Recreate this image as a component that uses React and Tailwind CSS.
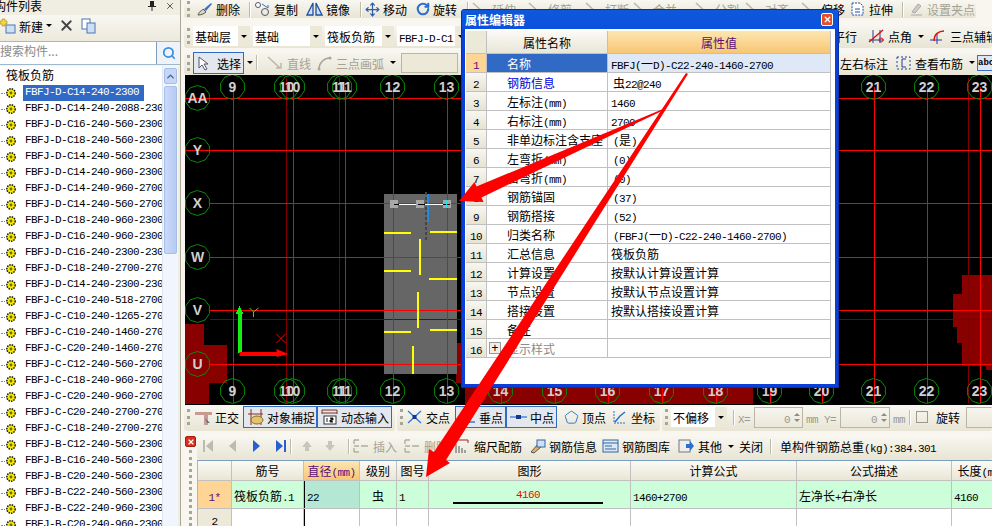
import React from 'react';
import { Move, RotateCw, Search, X, ChevronUp, Pentagon } from 'lucide-react';

const CJK = "[font-family:'Noto_Sans_CJK_SC',sans-serif]";

const treeItems = [
  'FBFJ-D-C14-240-2300', 'FBFJ-D-C14-240-2088-230', 'FBFJ-D-C16-240-560-2300', 'FBFJ-D-C18-240-560-2300',
  'FBFJ-D-C14-240-560-2300', 'FBFJ-D-C14-240-960-2300', 'FBFJ-D-C14-240-960-2700', 'FBFJ-D-C14-240-560-2700',
  'FBFJ-D-C18-240-960-2300', 'FBFJ-D-C16-240-960-2300', 'FBFJ-D-C16-240-2300-230', 'FBFJ-D-C18-240-2700-270',
  'FBFJ-D-C14-240-2300-230', 'FBFJ-C-C10-240-518-2700', 'FBFJ-C-C10-240-1265-270', 'FBFJ-C-C10-240-1460-270',
  'FBFJ-C-C20-240-1460-270', 'FBFJ-C-C12-240-560-2700', 'FBFJ-C-C18-240-960-2700', 'FBFJ-C-C20-240-960-2700',
  'FBFJ-C-C20-240-2700-270', 'FBFJ-C-C18-240-2700-270', 'FBFJ-B-C12-240-560-2300', 'FBFJ-B-C16-240-560-2300',
  'FBFJ-B-C20-240-560-2300', 'FBFJ-B-C22-240-560-2300', 'FBFJ-B-C22-240-960-2300', 'FBFJ-B-C20-240-960-2300',
];

const props = [
  { name: '名称', value: 'FBFJ(一D)-C22-240-1460-2700', selected: true },
  { name: '钢筋信息', value: '虫22@240', blue: true, pad: true },
  { name: '左标注(mm)', value: '1460' },
  { name: '右标注(mm)', value: '2700' },
  { name: '非单边标注含支座', value: '(是)', pad: true },
  { name: '左弯折(mm)', value: '(0)', pad: true },
  { name: '右弯折(mm)', value: '(0)', pad: true },
  { name: '钢筋锚固', value: '(37)', pad: true },
  { name: '钢筋搭接', value: '(52)', pad: true },
  { name: '归类名称', value: '(FBFJ(一D)-C22-240-1460-2700)', pad: true },
  { name: '汇总信息', value: '筏板负筋' },
  { name: '计算设置', value: '按默认计算设置计算' },
  { name: '节点设置', value: '按默认节点设置计算' },
  { name: '搭接设置', value: '按默认搭接设置计算' },
  { name: '备注', value: '' },
  { name: '显示样式', value: '', expand: true },
];

// mixed latin / cjk text, the latin gets the narrow look of the original bitmap font
function T({ children, className = '' }) {
  const parts = String(children).split(/([\x20-\x7e]+)/).filter(Boolean);
  return (
    <span className={`whitespace-nowrap ${className}`}>
      {parts.map((p, i) =>
        /^[\x20-\x7e]+$/.test(p)
          ? <span key={i} className="[font-family:'Liberation_Mono',monospace] text-[11px] tracking-[-0.6px]">{p}</span>
          : <span key={i} className={`${CJK} text-[12px]`}>{p}</span>
      )}
    </span>
  );
}

function Grip() {
  return <div className="mx-[3px] w-[3px] h-[16px] shrink-0 border-l-[3px] border-dotted border-[#a8a594]" />;
}

function Sep() {
  return <div className="mx-[3px] w-[2px] h-[15px] shrink-0 border-l border-r border-l-[#bdbaa8] border-r-white" />;
}

function Tool({ w, icon, label, muted, boxed, right }) {
  return (
    <div
      style={{ width: w }}
      className={`flex items-center gap-[3px] h-[22px] shrink-0 ${boxed ? 'border border-[#316ac5] bg-[#e3e7ee] pl-[3px]' : ''} ${muted ? 'text-[#a5a294]' : 'text-black'}`}
    >
      {icon}
      <T>{label}</T>
      {right}
    </div>
  );
}

const Caret = () => <span className="ml-[3px] w-0 h-0 shrink-0 border-x-[3px] border-x-transparent border-t-[3px] border-t-black" />;

const I = ({ children, w = 17 }) => (
  <svg width={w} height="16" viewBox="0 0 17 16" className="shrink-0">{children}</svg>
);

const icons = {
  erase: <I><path d="M2 14 C4 9 6 10 7 8 L10 11 C8 13 5 14 2 14Z" fill="#d8d4c0" stroke="#555" /><path d="M8 8 L15 2 L16 3 L10 10Z" fill="#3f6fc4" /></I>,
  copy: <I><circle cx="4" cy="4" r="2.5" fill="#fff" stroke="#556" /><circle cx="11" cy="11" r="3.5" fill="none" stroke="#556" /><path d="M8 3 L14 7 M14 7 V4" stroke="#2a6fd0" /></I>,
  mirror: <I><path d="M7 2 L1 14 H7Z M10 2 L16 14 H10Z" fill="#cfe0f6" stroke="#1f4fa0" strokeWidth="1.3" /></I>,
  stretch: <I><path d="M3 2 H11 L14 5 V14 H3Z" fill="#fff" stroke="#1f4fa0" strokeDasharray="2 1" /><path d="M6 8 H11 M6 11 H11" stroke="#1f4fa0" /></I>,
  grip: <I><path d="M4 14 H15 M5 11 L11 3 L14 5 L8 12Z" fill="#ccc" stroke="#aaa" /></I>,
  angle: <I><path d="M1 12 H16 M5 2 V15 M12 2 V15" stroke="#1f3f9f" /><path d="M1 14 L15 2" stroke="#e01010" strokeWidth="1.5" /><circle cx="13" cy="12" r="2" fill="none" stroke="#e01010" /></I>,
  arc: <I><path d="M0 12 H12 M7 6 V16" stroke="#1f3f9f" /><path d="M4 13 C4 6 9 3 14 3" fill="none" stroke="#e01010" strokeWidth="1.5" /></I>,
  rebar: <I><path d="M2 2 H15 V14 H2Z" fill="none" stroke="#1f3f9f" strokeDasharray="2 2" /><path d="M7 4 H11 M7 4 V12 M7 12 H11" stroke="#1f3f9f" /></I>,
  pick: <I><path d="M2 2 V13 L5 10 L8 15 L10 14 L7 9 H11Z" fill="#fff" stroke="#556" /></I>,
  line: <I><path d="M1 2 L13 13 M9 13 H14 V8" stroke="#b8b6a8" strokeWidth="1.4" fill="none" /></I>,
  arc3: <I><path d="M3 14 C3 8 8 3 14 3" fill="none" stroke="#a8a69a" strokeWidth="1.5" /><circle cx="3" cy="14" r="1.5" fill="#a8a69a" /><circle cx="14" cy="3" r="1.5" fill="#a8a69a" /></I>,
  ortho: <I><path d="M0 3 H17 V6 H13 V16 H9 V6 H0Z" fill="#c99a94" /><path d="M10 9 L15 14 L12 14Z" fill="#5a6fa0" /></I>,
  snap: <I><path d="M4 0 V16 M14 0 V16" stroke="#8a3020" /><path d="M1 5 H16" stroke="#8a3020" /><ellipse cx="10" cy="11" rx="6" ry="4" fill="#e3c46a" stroke="#8a6a20" /></I>,
  dyn: <I><path d="M1 1 H16 M1 4 H16 M1 1 V5 M16 1 V5" stroke="#8a3020" /><rect x="3" y="7" width="12" height="8" fill="#fff" stroke="#333" /><path d="M6 9 V13 M9 9 H12 V11 H9 V13 H12" stroke="#222" /></I>,
  cross: <I><path d="M2 2 L15 14 M15 2 L2 14" stroke="#3878d8" strokeWidth="1.4" /><rect x="6.5" y="6" width="4" height="4" fill="#123a8a" /></I>,
  perp: <I><path d="M8 1 V12 M1 13 H16" stroke="#3878d8" strokeWidth="1.3" /><rect x="6.5" y="10" width="4" height="4" fill="#123a8a" /></I>,
  mid: <I><path d="M0 8 H17" stroke="#3878d8" strokeWidth="1.3" /><rect x="6" y="6" width="5" height="4" fill="#123a8a" /></I>,
  vertex: <Pentagon size={15} color="#2a6fd0" strokeWidth={1.5} className="shrink-0" />,
  coord: <I><path d="M3 2 V14 H15" stroke="#2a6fd0" strokeDasharray="2 1" fill="none" /><path d="M4 13 L9 7 L14 3" stroke="#2a6fd0" strokeWidth="1.5" fill="none" /></I>,
  scale: <I><path d="M2 15 V6 M5 15 V8 M8 15 V10 M11 15 V12" stroke="#555" /><path d="M1 2 H14 V5" stroke="#a02020" fill="none" /></I>,
  info: <I><path d="M2 14 L9 6 L12 9 L5 15Z" fill="#e8b060" stroke="#555" /><rect x="8" y="2" width="8" height="7" fill="#cfe0f6" stroke="#33659f" /></I>,
  lib: <I><rect x="1" y="2" width="15" height="12" fill="#dbe8f8" stroke="#33659f" /><path d="M1 5 H16 M3 8 H10 M3 11 H14" stroke="#33659f" /></I>,
  other: <I><rect x="1" y="2" width="11" height="12" fill="#eee" stroke="#777" /><path d="M8 6 H12 V3 L16 8 L12 13 V10 H8Z" fill="#2a6fd0" /></I>,
  insert: <I><path d="M1 2 H6 M1 8 H6 M1 14 H6 M1 2 V6 M1 10 V14 M8 8 H15" stroke="#b0ae9e" strokeWidth="1.4" /></I>,
};

function Combo({ w, text }) {
  return (
    <div style={{ width: w }} className="flex items-center h-[20px] bg-white mr-[3px] shrink-0">
      <div className="flex-1 pl-[2px] overflow-hidden"><T>{text}</T></div>
      <div className="w-[12px] h-full bg-[#ece9d8] flex items-center justify-center">
        <span className="w-0 h-0 border-x-[3px] border-x-transparent border-t-[3px] border-t-black" />
      </div>
    </div>
  );
}

const bar = 'flex items-center rounded-[3px] bg-gradient-to-b from-[#f8f7f1] to-[#e8e5d5]';

function TreePanel() {
  return (
    <aside className="w-[181px] h-full shrink-0 flex flex-col border-r border-[#a9a797] overflow-hidden bg-[#f7f5ec]">
      <div className="h-[15px] flex items-center justify-between pr-[5px] bg-[#f0eee2]">
        <span className={`${CJK} text-[12px] -ml-[6px] -mt-[4px] leading-[14px] whitespace-nowrap`}>构件列表</span>
        <div className="flex items-center gap-[9px] -mt-[3px]">
          <svg width="8" height="10" viewBox="0 0 8 10"><path d="M2 0 H6 V5 H8 V6 H4.5 V10 H3.5 V6 H0 V5 H2Z" fill="#222" /></svg>
          <X size={10} strokeWidth={1.5} />
        </div>
      </div>
      <div className="h-[26px] flex items-center gap-[6px] pb-[5px] bg-gradient-to-b from-[#f8f7f1] to-[#ece9dc]">
        <svg width="17" height="16" viewBox="0 0 17 16" className="shrink-0 -ml-[1px]">
          <rect x="7" y="7" width="9" height="8" fill="#cfdff4" stroke="#4a76b0" />
          <path d="M3 1 H6 V3 H8 V6 H6 V8 H3 V6 H1 V3 H3Z" fill="#f6d440" stroke="#a98a20" strokeWidth="0.6" />
        </svg>
        <div className="flex items-center -ml-[3px]"><T>新建</T><Caret /></div>
        <X size={17} strokeWidth={2.6} className="text-[#444]" />
        <svg width="16" height="16" viewBox="0 0 16 16">
          <rect x="1" y="1" width="8" height="10" fill="#fff" stroke="#4a76b0" />
          <rect x="6" y="5" width="8" height="10" fill="#cfe0f6" stroke="#4a76b0" />
        </svg>
      </div>
      <div className="h-[24px] flex items-stretch bg-white border-y border-[#9fb8d0]">
        <div className={`flex-1 border-r border-[#7f9db9] ${CJK} text-[12px] leading-[18px] text-[#8a8a8a] whitespace-nowrap`}>搜索构件...</div>
        <div className="w-[23px] flex items-center justify-center bg-[#eef3fa]">
          <Search size={14} strokeWidth={3} className="text-[#3c8ee0]" />
        </div>
      </div>
      <div className="flex-1 flex min-h-0 bg-white mt-[1px]">
        <div className="flex-1 min-w-0 overflow-hidden">
          <div className={`${CJK} text-[12px] leading-[18px] pl-[6px] h-[19px]`}>筏板负筋</div>
          {treeItems.map((item, i) => (
            <div key={item + i} className="h-[16px] flex items-center whitespace-nowrap">
              <span className="w-[4px] ml-[1px] shrink-0 border-t border-dotted border-[#888]" />
              <svg width="12" height="12" viewBox="0 0 12 12" className="shrink-0">
                <circle cx="6" cy="6" r="4.2" fill="#f8e800" stroke="#222" strokeWidth="1.6" strokeDasharray="1.5 1" />
                <circle cx="6" cy="6" r="1.4" fill="#6a6a10" />
              </svg>
              <span className={`ml-[6px] pl-[2px] h-[16px] shrink-0 leading-[15px] [font-family:'Liberation_Mono',monospace] text-[11px] tracking-[-0.6px] ${i === 0 ? 'bg-[#316ac5] text-white w-[121px]' : 'text-black'}`}>{item}</span>
            </div>
          ))}
        </div>
        <div className="w-[16px] shrink-0 flex flex-col bg-[#f1f5fd] border-l border-[#dde6f5]">
          <div className="h-[16px] mt-[2px] mx-[1px] rounded-[2px] bg-[#c6d6f6] border border-[#a8bde8] flex items-center justify-center">
            <ChevronUp size={11} strokeWidth={3} className="text-[#41608f]" />
          </div>
          <div className="h-[168px] mt-[2px] mx-[1px] rounded-[2px] bg-gradient-to-r from-[#c9d9f8] to-[#b7ccf4] border border-[#a8bde8]" />
        </div>
        <div className="w-[2px] bg-[#f0eee2]" />
      </div>
    </aside>
  );
}

function TopToolbars() {
  return (
    <div className="h-[75px] shrink-0 flex flex-col bg-[#f8f6ee]">
      <div className={`${bar} h-[18px] w-[792px] overflow-hidden`}>
        <Grip />
        <div className="w-[3px] shrink-0" />
        <Tool w={50} icon={icons.erase} label="删除" />
        <Sep />
        <Tool w={52} icon={icons.copy} label="复制" />
        <Tool w={51} icon={icons.mirror} label="镜像" />
        <Sep />
        <Tool w={51} icon={<Move size={15} color="#2a5fb0" strokeWidth={2} className="shrink-0" />} label="移动" />
        <Tool w={48} icon={<RotateCw size={14} color="#2a6fd0" strokeWidth={3.5} className="shrink-0" />} label="旋转" />
        <Sep />
        <Tool w={56} muted icon={icons.line} label="延伸" />
        <Tool w={57} muted icon={icons.line} label="修剪" />
        <Tool w={48} muted icon={icons.line} label="打断" />
        <Tool w={62} muted icon={icons.line} label="合并" />
        <Tool w={50} muted icon={icons.line} label="分割" />
        <Tool w={56} muted icon={icons.line} label="对齐" />
        <Tool w={48} icon={icons.line} label="偏移" />
        <Tool w={50} icon={icons.stretch} label="拉伸" />
        <Sep />
        <Tool w={74} icon={icons.grip} label="设置夹点" muted />
      </div>
      <div className={`${bar} h-[24px] mt-[6px]`}>
        <Grip />
        <Combo w={57} text="基础层" />
        <Combo w={69} text="基础" />
        <Combo w={69} text="筏板负筋" />
        <Combo w={70} text="FBFJ-D-C1" />
        <div className="w-[363px] shrink-0" />
        <T className="w-[35px] shrink-0">平行</T>
        <Tool w={62} icon={icons.angle} label="点角" right={<Caret />} />
        <Tool w={62} icon={icons.arc} label="三点辅轴" />
      </div>
      <div className={`${bar} h-[25px] mt-[2px]`}>
        <Grip />
        <Tool w={51} boxed icon={icons.pick} label="选择" />
        <Caret />
        <Sep />
        <div className="w-[6px] shrink-0" />
        <Tool w={49} muted icon={icons.line} label="直线" />
        <Tool w={85} muted icon={icons.arc3} label="三点画弧" right={<Caret />} />
        <div className="w-[57px] h-[20px] border border-[#b9b6a5] bg-[#ece9d8] shrink-0" />
        <div className="w-[382px] shrink-0" />
        <T className="w-[55px] shrink-0">左右标注</T>
        <Tool w={82} icon={icons.rebar} label="查看布筋" right={<Caret />} />
        <div className="w-[20px] h-[16px] shrink-0 border border-[#3a6fc0] bg-[#dce8fa] overflow-hidden [font-family:'Liberation_Mono',monospace] text-[9px] leading-[14px] font-bold">abc</div>
      </div>
    </div>
  );
}

function Drawing() {
  const cols = [['9', 233], ['10', 287], ['10', 293], ['11', 340], ['11', 345], ['12', 393], ['13', 447], ['14', 501], ['15', 555], ['16', 608], ['17', 662], ['18', 716], ['19', 770], ['20', 822], ['21', 874], ['22', 927], ['23', 980]];
  const rows = [['AA', 98, 185], ['Y', 150, 185], ['X', 203, 210], ['W', 257, 210], ['V', 310, 210], ['U', 364, 210]];
  const bright = [233, 293, 345, 393, 447, 501, 555, 608, 662, 716, 770, 822, 874, 927, 980];
  const decagon = (cx, cy) => Array.from({ length: 10 }, (_, i) => `${cx + 12.5 * Math.cos(i * Math.PI / 5 + 0.3)},${cy + 12.5 * Math.sin(i * Math.PI / 5 + 0.3)}`).join(' ');
  const label = { fontFamily: 'Liberation Sans', fontSize: 14, fill: '#cfcfcf', textAnchor: 'middle', fontWeight: 700 };
  return (
    <svg viewBox="185 75 807 330" className="w-full h-full block" shapeRendering="crispEdges">
      <rect x="185" y="75" width="807" height="330" fill="#000" />
      <g fill="#880000">
        <path d="M185 324 H204 V345 H227 V383 H209 V404 H185Z" />
        <path d="M456 343 H466 V375 H753 V404 H465 V383 H456Z" />
        <path d="M962 275 H992 V370 H986 V366 H962 V343 H957 V327 H953 V294 H962Z" />
      </g>
      <rect x="384" y="194" width="73" height="180" fill="#666" />
      <path d="M286.5 78 V403 M340 78 V403 M969 78 V403" stroke="#800000" />
      <path d="M210 319 H992" stroke="#800000" />
      {bright.map(x => <path key={x} d={`M${x}.5 87 V403`} stroke="#f00" />)}
      {rows.map(([n, y, x]) => <path key={n} d={`M${x} ${y}.5 H992`} stroke="#f00" />)}
      <g stroke="#ffff00" strokeWidth="2">
        <path d="M384 233 H411 M430 232 H457 M384 271 H411 M429 279 H457 M384 332 H411 M430 330 H457" />
        <path d="M420 239 V275 M418 292 V328 M413 346 V374" />
      </g>
      <path d="M426.5 192 V240" stroke="#444" strokeDasharray="3 2" strokeWidth="2" />
      <rect x="427" y="194" width="2" height="28" fill="#1e88e5" />
      <path d="M393 204.5 H447" stroke="#fff" />
      {[390, 416, 443].map(x => <rect key={x} x={x} y="200" width="8" height="8" fill="#a8a8a8" />)}
      <path d="M393 204.5 H399 M418 204.5 H425 M443 204.5 H450" stroke="#000" />
      <path d="M393.5 200 V208 M446.5 200 V208" stroke="#18e8f0" />
      {cols.map(([n, x], i) => (
        <g key={i}>
          <polygon points={decagon(x, 87)} fill="none" stroke="#0a8a0a" shapeRendering="auto" />
          <polygon points={decagon(x, 391)} fill="none" stroke="#0a8a0a" shapeRendering="auto" />
          <text x={x} y="92" style={label}>{n}</text>
          <text x={x} y="396" style={label}>{n}</text>
        </g>
      ))}
      {rows.map(([n, y]) => (
        <g key={n}>
          <polygon points={decagon(198, y)} fill="none" stroke="#0a8a0a" shapeRendering="auto" />
          <text x="198" y={y + 5} style={label}>{n}</text>
        </g>
      ))}
      <path d="M238 353 V314 H236 L240 306 L244 314 H242 V353Z" fill="#14f014" />
      <path d="M240 352 H277 V349 L289 354 L277 357 V356 H240Z" fill="#f00" shapeRendering="auto" />
      <path d="M250 308 L254 312 L259 308 M254 312 V317" stroke="#14f014" fill="none" shapeRendering="auto" />
      <path d="M277 334 L286 343 M286 334 L277 343" stroke="#f00" fill="none" shapeRendering="auto" />
    </svg>
  );
}

function SnapBar() {
  return (
    <div className="h-[28px] shrink-0 flex items-start gap-[2px] pt-[1px] bg-[#f8f6ee]">
      <div className={`${bar} h-[25px] pb-[3px] w-[211px] shrink-0`}>
        <Grip />
        <div className="w-[2px] shrink-0" />
        <Tool w={48} icon={icons.ortho} label="正交" />
        <Tool w={74} boxed icon={icons.snap} label="对象捕捉" />
        <Tool w={75} boxed icon={icons.dyn} label="动态输入" />
      </div>
      <div className={`${bar} h-[25px] pb-[3px] w-[263px] shrink-0`}>
        <Grip />
        <Tool w={49} icon={icons.cross} label="交点" />
        <Tool w={51} boxed icon={icons.perp} label="垂点" />
        <Tool w={51} boxed icon={icons.mid} label="中点" />
        <div className="w-[7px] shrink-0" />
        <Tool w={47} icon={icons.vertex} label="顶点" />
        <Tool w={46} icon={icons.coord} label="坐标" />
      </div>
      <div className={`${bar} h-[25px] pb-[3px] flex-1 min-w-0 overflow-hidden`}>
        <Grip />
        <Combo w={56} text="不偏移" />
        <Sep />
        <T className="w-[16px] shrink-0 text-[#9c9a8c]">X=</T>
        <Spinner w={49} />
        <T className="ml-[3px] mr-[6px] text-[#9c9a8c]">mm</T>
        <T className="w-[16px] shrink-0 text-[#9c9a8c]">Y=</T>
        <Spinner w={50} />
        <T className="ml-[3px] mr-[1px] text-[#9c9a8c]">mm</T>
        <Sep />
        <div className="w-[12px] h-[12px] border border-[#9c9a8c] shrink-0 ml-[2px]" />
        <T className="ml-[8px] mr-[6px]">旋转</T>
        <Spinner w={50} />
      </div>
    </div>
  );
}

function Spinner({ w }) {
  return (
    <div style={{ width: w }} className="h-[21px] shrink-0 flex items-center justify-end border border-[#b9b6a5] pr-[2px]">
      <T className="text-[#9c9a8c] mr-[4px]">0</T>
      <div className="flex flex-col gap-[3px]">
        <span className="w-0 h-0 border-x-[3px] border-x-transparent border-b-[3px] border-b-[#8f8d80]" />
        <span className="w-0 h-0 border-x-[3px] border-x-transparent border-t-[3px] border-t-[#8f8d80]" />
      </div>
    </div>
  );
}

function NavArrow({ dir, muted, end }) {
  const c = muted ? '#bdbbad' : '#2a5fd0';
  return (
    <svg width="12" height="14" viewBox="0 0 12 14" className="shrink-0">
      {dir === 'r'
        ? <path d={end ? 'M1 1 L8 7 L1 13Z M9 1 H11 V13 H9Z' : 'M3 1 L10 7 L3 13Z'} fill={c} />
        : <path d={end ? 'M11 1 L4 7 L11 13Z M1 1 H3 V13 H1Z' : 'M9 1 L2 7 L9 13Z'} fill={c} />}
    </svg>
  );
}

function GridCell({ w, children, className = '' }) {
  return (
    <div style={{ width: w }} className={`shrink-0 h-full flex items-center overflow-hidden border-r border-[#c0c0c0] ${className}`}>
      {children}
    </div>
  );
}

function RebarPanel() {
  const head = 'justify-center pb-[2px] bg-gradient-to-b from-[#fbfaf6] to-[#e9e6d6]';
  const orange = 'justify-center pb-[2px] bg-gradient-to-b from-[#fde6b0] to-[#f7c674] text-[#5a0e78]';
  return (
    <div className="flex-1 min-h-0 flex bg-[#f8f6ee]">
      <div className="w-[13px] shrink-0 flex flex-col items-center pt-[3px]">
        <div className="w-[11px] h-[11px] rounded-[2px] bg-[#d83020] border border-[#a02010] flex items-center justify-center">
          <X size={8} strokeWidth={3.5} className="text-white" />
        </div>
        <div className="mt-[3px] flex-1 border-l-[3px] border-dotted border-[#a8a594]" />
      </div>
      <div className="flex-1 min-w-0 flex flex-col">
        <div className={`${bar} h-[25px] mt-[2px] pb-[3px] shrink-0 pl-[3px] overflow-hidden`}>
          <div className="w-[2px]" />
          <NavArrow dir="l" end muted />
          <div className="w-[13px]" />
          <NavArrow dir="l" muted />
          <div className="w-[11px]" />
          <NavArrow dir="r" />
          <div className="w-[13px]" />
          <NavArrow dir="r" end />
          <Sep />
          <div className="w-[6px]" />
          <svg width="12" height="12" viewBox="0 0 12 12" className="shrink-0"><path d="M6 1 L11 7 H8 V11 H4 V7 H1Z" fill="#c8c6b8" /></svg>
          <div className="w-[11px]" />
          <svg width="12" height="12" viewBox="0 0 12 12" className="shrink-0"><path d="M6 11 L11 5 H8 V1 H4 V5 H1Z" fill="#c8c6b8" /></svg>
          <div className="w-[9px]" />
          <Sep />
          <Tool w={51} muted icon={icons.insert} label="插入" />
          <Tool w={50} muted icon={icons.insert} label="删除" />
          <Tool w={75} icon={icons.scale} label="缩尺配筋" />
          <Tool w={73} icon={icons.info} label="钢筋信息" />
          <Tool w={76} icon={icons.lib} label="钢筋图库" />
          <Tool w={61} icon={icons.other} label="其他" right={<Caret />} />
          <T className="w-[28px] shrink-0">关闭</T>
          <Sep />
          <T className="ml-[5px] shrink-0">单构件钢筋总重(kg):384.301</T>
        </div>
        <div className="flex-1 min-h-0 overflow-hidden border-t border-[#7a9ebd] border-l border-l-[#9fb8d0]">
          <div className="h-[20px] flex border-b border-[#c0c0c0]">
            <GridCell w={34} className={head} />
            <GridCell w={72} className={head}><T>筋号</T></GridCell>
            <GridCell w={56} className={orange}><T>直径(mm)</T></GridCell>
            <GridCell w={37} className={head}><T>级别</T></GridCell>
            <GridCell w={32} className={head}><T>图号</T></GridCell>
            <GridCell w={202} className={head}><T>图形</T></GridCell>
            <GridCell w={166} className={head}><T>计算公式</T></GridCell>
            <GridCell w={155} className={head}><T>公式描述</T></GridCell>
            <GridCell w={60} className={head}><T>长度(mm)</T></GridCell>
          </div>
          <div className="h-[28px] flex border-b border-[#c0c0c0] bg-[#ccffd9]">
            <GridCell w={34} className="justify-center bg-[#ffd596] text-[#5a0e78]"><T>1*</T></GridCell>
            <GridCell w={72} className="pl-[2px]"><T>筏板负筋.1</T></GridCell>
            <GridCell w={56} className="pl-[2px] bg-[#b4e8d4] border-l border-l-black"><T>22</T></GridCell>
            <GridCell w={37} className="justify-center"><T>虫</T></GridCell>
            <GridCell w={32} className="pl-[2px]"><T>1</T></GridCell>
            <GridCell w={202} className="flex-col justify-center pl-[24px] items-start">
              <div className="w-[150px] text-center leading-[12px] mt-[1px] text-[#f00]"><T>4160</T></div>
              <div className="w-[150px] h-[2px] mt-[1px] bg-black" />
            </GridCell>
            <GridCell w={166} className="pl-[2px]"><T>1460+2700</T></GridCell>
            <GridCell w={155} className="pl-[2px]"><T>左净长+右净长</T></GridCell>
            <GridCell w={60} className="pl-[2px]"><T>4160</T></GridCell>
          </div>
          <div className="h-[20px] flex bg-white">
            <GridCell w={34} className="justify-center bg-[#ece9d8]"><T>2</T></GridCell>
            <GridCell w={72} />
            <GridCell w={56} className="border-l border-l-black" />
            <GridCell w={37} />
            <GridCell w={32} />
            <GridCell w={202} />
            <GridCell w={166} />
            <GridCell w={155} />
            <GridCell w={60} />
          </div>
        </div>
      </div>
    </div>
  );
}

function PropertyDialog() {
  return (
    <div className="absolute left-[461px] top-[9px] w-[378px] h-[379px] flex flex-col bg-[#0a40d8] rounded-t-[3px] border border-[#0830a8]">
      <div className="h-[19px] shrink-0 flex items-center justify-between pl-[3px] pr-[5px] bg-gradient-to-b from-[#1058d8] to-[#0a50e0]">
        <span className={`${CJK} text-[12px] font-bold text-white`}>属性编辑器</span>
        <div className="w-[12px] h-[13px] rounded-[2px] bg-[#e0502c] border border-white flex items-center justify-center">
          <X size={9} strokeWidth={3.5} className="text-white" />
        </div>
      </div>
      <div className="flex-1 mx-[3px] mb-[3px] bg-white pt-[2px] pl-[1px] pr-[4px]">
        <div className="h-[23px] flex border-b border-[#c0c0c0]">
          <GridCell w={21} className="bg-[#ece9d8]" />
          <GridCell w={121} className="justify-center bg-gradient-to-b from-[#fbfaf6] to-[#e9e6d6]"><T>属性名称</T></GridCell>
          <div className="flex-1 flex items-center justify-center bg-gradient-to-b from-[#fde6b0] to-[#f7c674] text-[#5a0e78] border-r border-[#c0c0c0]"><T>属性值</T></div>
        </div>
        {props.map((p, i) => (
          <div key={p.name} className="h-[19px] flex border-b border-[#c0c0c0]">
            <GridCell w={21} className={`justify-center ${i === 0 ? 'bg-[#ffd596] text-[#5a0e78]' : 'bg-gradient-to-b from-[#f8f7f0] to-[#e6e3d3]'}`}>
              <T>{i + 1}</T>
            </GridCell>
            <GridCell w={121} className={`pl-[20px] relative ${p.selected ? 'bg-[#316ac5] text-white' : p.blue ? 'text-[#0000e0]' : p.expand ? 'text-[#8a8a8a]' : 'text-black'}`}>
              {p.expand && (
                <span className="absolute left-[2px] top-[3px] w-[12px] h-[12px] border border-[#9a9a9a] bg-[#efefe8] flex items-center justify-center text-black text-[12px] leading-none">+</span>
              )}
              <T>{p.name}</T>
            </GridCell>
            <div className={`flex-1 flex items-center border-r border-[#c0c0c0] ${p.pad ? 'pl-[5px]' : 'pl-[3px]'} ${p.selected ? 'bg-[#dfe8f6]' : ''}`}>
              <T>{p.value}</T>
            </div>
          </div>
        ))}
      </div>
    </div>
  );
}

export default function App() {
  return (
    <div className="relative w-[992px] h-[526px] overflow-hidden flex bg-[#f8f6ee]">
      <TreePanel />
      <div className="w-[3px] shrink-0" />
      <main className="flex-1 min-w-0 flex flex-col">
        <TopToolbars />
        <div className="h-[330px] shrink-0"><Drawing /></div>
        <SnapBar />
        <RebarPanel />
      </main>
      <PropertyDialog />
      {/* annotation arrows drawn over the screenshot */}
      <svg className="absolute inset-0 pointer-events-none" width="992" height="526" viewBox="0 0 992 526">
        <path d="M663 109 L664 110 L481.5 197.5 L483.5 202 L459 201 L474.5 182 L476.5 186.5Z" fill="#f00" />
        <path d="M686 73 L688 74 L446 460 L450 463 L426 477 L429 449 L434 452Z" fill="#f00" />
      </svg>
    </div>
  );
}
